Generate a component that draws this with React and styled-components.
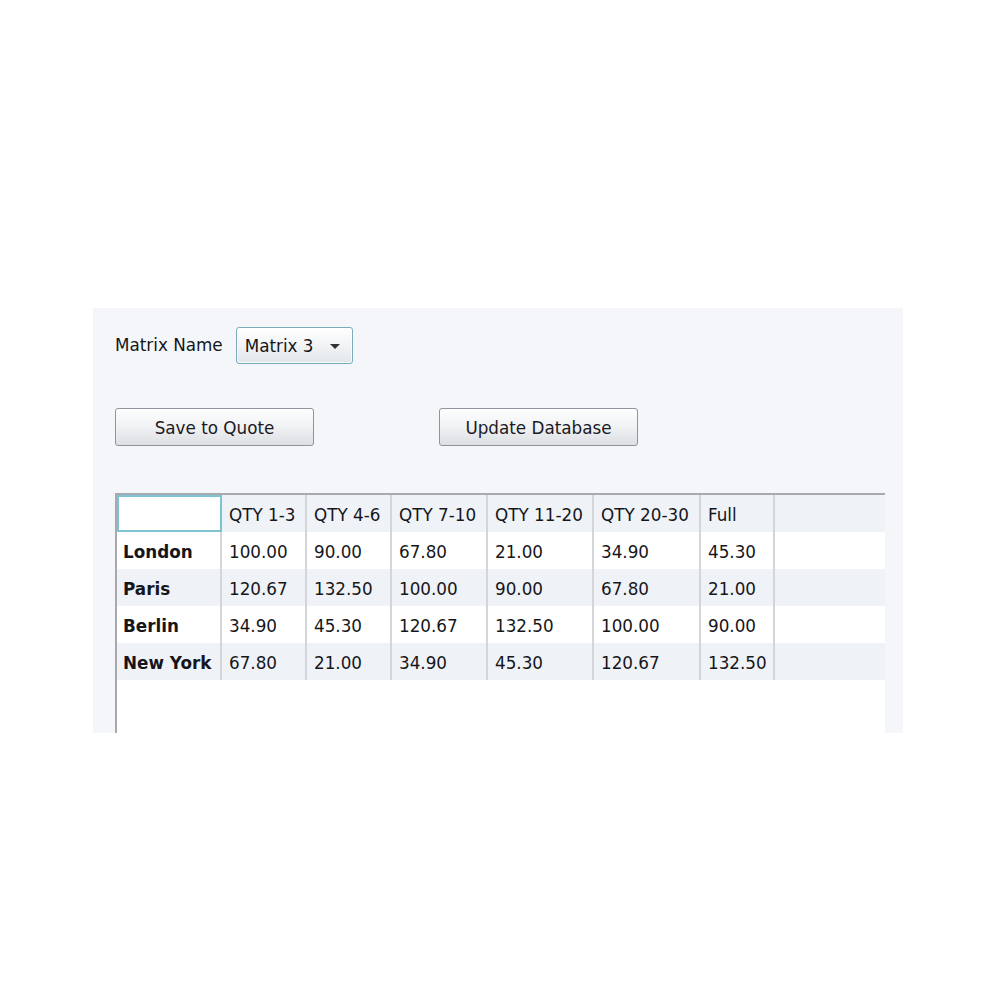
import React from "react";
import styled, { createGlobalStyle } from "styled-components";

const Global = createGlobalStyle`
  html, body { margin: 0; padding: 0; background: #ffffff; }
  body { font-family: "DejaVu Sans", Verdana, sans-serif; }
`;

const Page = styled.div`
  width: 1000px;
  height: 1000px;
  padding: 308px 0 0 93px;
  box-sizing: border-box;
`;

const Panel = styled.div`
  width: 810px;
  height: 425px;
  background: #f4f6f9;
  box-sizing: border-box;
  padding: 19px 18px 0 22px;
  display: flex;
  flex-direction: column;
  overflow: hidden;
  color: #16161a;
  font-size: 16.8px;
`;

const FieldRow = styled.div`
  display: flex;
  align-items: center;
  gap: 13px;
  height: 37px;
`;

const Label = styled.span`
  position: relative;
  top: -1px;
`;

const Select = styled.div`
  width: 117px;
  height: 37px;
  box-sizing: border-box;
  border: 1px solid #7aaebf;
  border-radius: 3px;
  background: linear-gradient(#ffffff, #e3e7ea);
  box-shadow: inset 0 0 0 1px rgba(255,255,255,0.7);
  display: flex;
  align-items: center;
  padding: 1px 0 0 8px;
  gap: 16px;
`;

const Caret = styled.span`
  width: 0;
  height: 0;
  border-left: 5px solid transparent;
  border-right: 5px solid transparent;
  border-top: 5px solid #333;
  margin-top: 0;
`;

const ButtonRow = styled.div`
  display: flex;
  gap: 125px;
  margin-top: 44px;
`;

const Button = styled.div`
  width: 199px;
  height: 38px;
  box-sizing: border-box;
  border: 1px solid #8e959c;
  border-radius: 3px;
  background: linear-gradient(#fefefe 0%, #f2f3f5 45%, #dcdfe3 100%);
  display: flex;
  align-items: center;
  justify-content: center;
  padding-top: 1px;
  color: #1b1a24;
`;

const Grid = styled.div`
  margin-top: 47px;
  width: 770px;
  flex: 1;
  background: #ffffff;
  border-top: 2px solid #a6a9ad;
  border-left: 2px solid #a6a9ad;
  box-sizing: border-box;
  display: flex;
  flex-direction: column;
`;

const Row = styled.div`
  display: flex;
  height: 37px;
  background: ${(p) => (p.$alt ? "#eff2f7" : "#ffffff")};
`;

const Cell = styled.div`
  width: ${(p) => p.$w}px;
  flex: none;
  box-sizing: border-box;
  border-right: 2px solid #d3d5d8;
  padding: 2px 0 0 ${(p) => (p.$bold ? 6 : 7)}px;
  display: flex;
  align-items: center;
  font-weight: ${(p) => (p.$bold ? 700 : 400)};
  white-space: nowrap;
`;

const Corner = styled.div`
  width: 105px;
  flex: none;
  box-sizing: border-box;
  border: 2px solid #7ec3d1;
  background: #ffffff;
`;

const Filler = styled.div`
  flex: 1;
`;

const widths = [105, 85, 85, 96, 106, 107, 74];
const headers = ["QTY 1-3", "QTY 4-6", "QTY 7-10", "QTY 11-20", "QTY 20-30", "Full"];
const rows = [
  ["London", "100.00", "90.00", "67.80", "21.00", "34.90", "45.30"],
  ["Paris", "120.67", "132.50", "100.00", "90.00", "67.80", "21.00"],
  ["Berlin", "34.90", "45.30", "120.67", "132.50", "100.00", "90.00"],
  ["New York", "67.80", "21.00", "34.90", "45.30", "120.67", "132.50"],
];

export default function App() {
  return (
    <>
      <Global />
      <Page>
        <Panel>
          <FieldRow>
            <Label>Matrix Name</Label>
            <Select>
              <span>Matrix 3</span>
              <Caret />
            </Select>
          </FieldRow>
          <ButtonRow>
            <Button>Save to Quote</Button>
            <Button>Update Database</Button>
          </ButtonRow>
          <Grid>
            <Row $alt>
              <Corner />
              {headers.map((h, i) => (
                <Cell key={h} $w={widths[i + 1]}>{h}</Cell>
              ))}
              <Filler />
            </Row>
            {rows.map((r, ri) => (
              <Row key={r[0]} $alt={ri % 2 === 1}>
                {r.map((v, ci) => (
                  <Cell key={ci} $w={widths[ci]} $bold={ci === 0}>{v}</Cell>
                ))}
                <Filler />
              </Row>
            ))}
          </Grid>
        </Panel>
      </Page>
    </>
  );
}
